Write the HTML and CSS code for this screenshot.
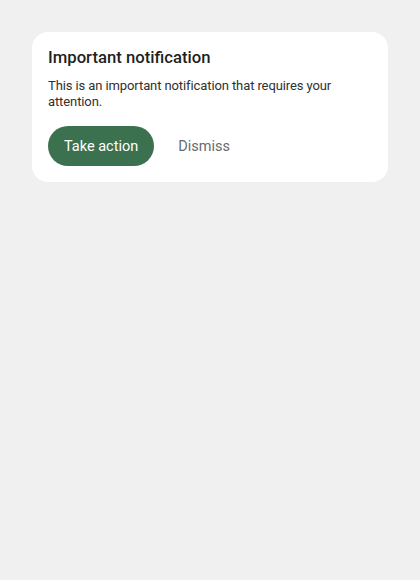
FILE: index.html
```html
<!DOCTYPE html>
<html>
<head>
<meta charset="utf-8">
<link rel="stylesheet" href="styles.css">
</head>
<body>
<div class="page">
  <div class="card">
    <div class="title">Important notification</div>
    <div class="body">This is an important notification that requires your attention.</div>
    <div class="actions">
      <button class="btn primary">Take action</button>
      <button class="btn text">Dismiss</button>
    </div>
  </div>
</div>
</body>
</html>
```
FILE: styles.css
```css
html, body {
  margin: 0;
  padding: 0;
  background: #f0f0f0;
  font-family: Roboto, "Noto Sans", sans-serif;
}
.page {
  padding: 32px;
}
.card {
  background: #ffffff;
  border-radius: 16px;
  padding: 16px;
  display: flex;
  flex-direction: column;
}
.title {
  font-size: 16.7px;
  font-weight: 500;
  color: #1f1f1f;
  line-height: 20px;
}
.body {
  margin-top: 10px;
  font-size: 13px;
  line-height: 16px;
  color: #303030;
  letter-spacing: -0.1px;
  padding-right: 20px;
}
.actions {
  margin-top: 16px;
  display: flex;
  gap: 8px;
  align-items: center;
}
.btn {
  height: 40px;
  border: none;
  border-radius: 20px;
  padding: 0 16px;
  font-family: inherit;
  font-size: 14.5px;
  font-weight: 400;
  background: transparent;
  letter-spacing: 0;
}
.primary {
  background: #3c7150;
  color: #ffffff;
}
.text {
  color: #6b6b6b;
}
```
